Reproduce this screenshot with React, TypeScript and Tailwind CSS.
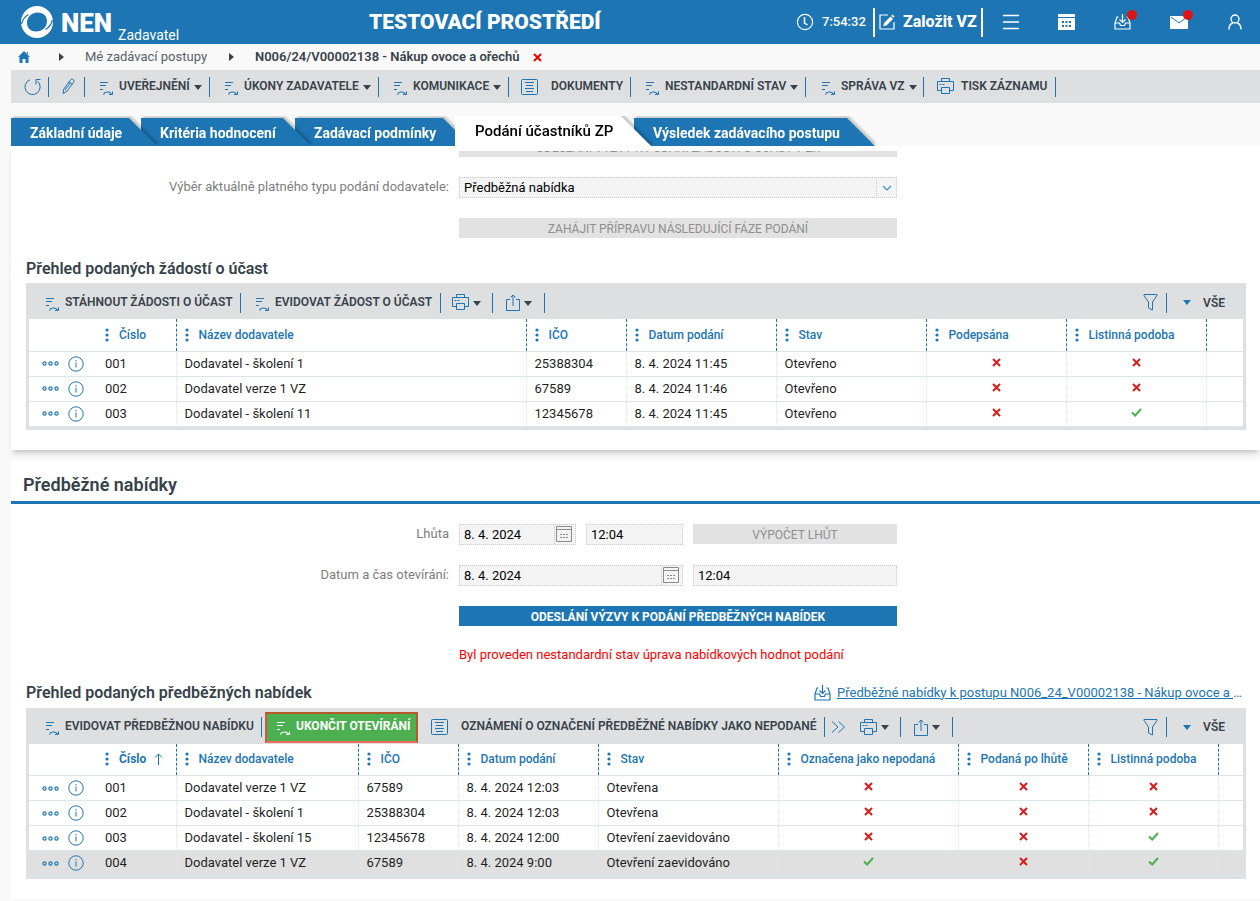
import { ReactNode } from "react";
import clsx from "clsx";

type IconProps = { className?: string };

const LogoMark = () => (
  <svg width="34" height="34" viewBox="0 0 34 34" fill="#fff">
    <path
      fillRule="evenodd"
      d="M17 1a16 16 0 1 1 0 32a16 16 0 1 1 0-32ZM18 7.500C11.500 7.500 7 12 7 18C7 23 11 26.500 16 26.500C22.500 26.500 27 22 27 16C27 11 23 7.500 18 7.500Z"
    />
    <path
      d="M1.500 19C2.500 15 5 11.500 8.500 9.500M32.500 15C31.500 19 29 22.500 25.500 24.500"
      stroke="#1d75b3"
      strokeWidth="1.200"
      fill="none"
    />
  </svg>
);

const ClockIcon = () => (
  <svg width="18" height="18" viewBox="0 0 18 18" fill="none" stroke="#fff" strokeWidth="1.200">
    <circle cx="9" cy="9" r="7.600" />
    <path d="M8.500 4v6l3 2" strokeWidth="1.500" />
  </svg>
);

const EditIcon = () => (
  <svg width="16" height="16" viewBox="0 0 16 16" fill="none" stroke="#fff">
    <path d="M9 1H1v14h14V8" strokeWidth="1.200" />
    <path d="M5 9l6.500-6.500l2.500 2.500l-6.500 6.500l-3.200.800z" fill="#fff" stroke="none" />
    <path d="M12.300 1.800l1.200-1.200l2 2l-1.200 1.200z" fill="#fff" stroke="none" />
  </svg>
);

const MenuIcon = () => (
  <svg width="18" height="16" viewBox="0 0 18 16" stroke="#fff" strokeWidth="1.500" strokeLinecap="round">
    <path d="M1.500 1.500h15M1.500 8h15M1.500 14.500h15" />
  </svg>
);

const CalendarSolidIcon = () => (
  <svg width="17" height="16" viewBox="0 0 17 16">
    <path d="M0 0h17v3H0zM0 4h17v12H0z" fill="#fff" />
    <path
      d="M4 7h2v2H4zM7.500 7h2v2h-2zM11 7h2v2h-2zM4 11h2v2H4zM7.500 11h2v2h-2zM11 11h2v2h-2z"
      fill="#1d75b3"
    />
  </svg>
);

const InboxIcon = () => (
  <svg width="17" height="16" viewBox="0 0 17 16" fill="none" stroke="currentColor" strokeWidth="1.200">
    <path d="M4.500 3H3L1 9v6h15V9l-2-6h-1.500" />
    <path d="M1 9h4.500l1 2.500h4l1-2.500H16M8.500 0v8M5.500 5.500l3 3l3-3" />
  </svg>
);

const MailIcon = () => (
  <svg width="18" height="13" viewBox="0 0 18 13">
    <path d="M0 0h18v13H0z" fill="#fff" />
    <path d="M1 1l8 6l8-6" fill="none" stroke="#1d75b3" />
  </svg>
);

const UserIcon = () => (
  <svg width="14" height="16" viewBox="0 0 14 16" fill="none" stroke="#fff" strokeWidth="1.300">
    <circle cx="7" cy="5" r="4" />
    <path d="M1 15.500C1 11.500 3 9.500 5 9M13 15.500C13 11.500 11 9.500 9 9" />
  </svg>
);

const HomeIcon = () => (
  <svg width="12" height="12" viewBox="0 0 12 12" fill="#1d75b3">
    <path d="M6 0l6 6h-1.500v6H7.500V8h-3v4H1.500V6H0zM8.500 1H10v3z" />
  </svg>
);

const RefreshIcon = () => (
  <svg width="18" height="18" viewBox="0 0 18 18" fill="none" stroke="#1d75b3">
    <path d="M6 1.800A7.600 7.600 0 1 0 13.500 3.200" />
    <path d="M16.500 1.500h-4.500v5" />
  </svg>
);

const PencilIcon = () => (
  <svg width="13" height="17" viewBox="0 0 13 17" fill="none" stroke="#1d75b3">
    <path d="M1 15.500l.800-4.500L8 2.500C9 1 10 .800 11 1.500C12.200 2.300 12.200 3.500 11.300 4.700L5 13.200zM7 4l3.200 2.300M3 12L8.500 4.800" />
  </svg>
);

const ActionIcon = ({ className }: IconProps) => (
  <svg className={className} width="15" height="15" viewBox="0 0 15 15" fill="none" stroke="currentColor">
    <path d="M1 1.500h8M1 4.500h6M1 8.500h3" strokeWidth="1.200" />
    <path d="M4.500 13.500c1-3 6-3.500 8-.500" strokeWidth="1.200" />
    <path d="M13.500 10.500v3h-3.500" />
  </svg>
);

const DocumentIcon = () => (
  <svg width="17" height="16" viewBox="0 0 17 16" fill="none" stroke="#1d75b3">
    <rect x=".5" y=".5" width="16" height="15" rx="1" />
    <path d="M4 3.500h9M5 6.500h7M4 9.500h9M5 12.500h7" />
  </svg>
);

const PrinterIcon = () => (
  <svg width="17" height="17" viewBox="0 0 17 17" fill="none" stroke="#1d75b3">
    <path d="M4.500 3.500v-3h8v3M4.500 12.500H.500v-9h16v9h-4" />
    <path d="M4.500 9.500h8v6h-8zM2.500 6.500h2M5.500 6.500h2" />
  </svg>
);

const ShareIcon = () => (
  <svg width="14" height="17" viewBox="0 0 14 17" fill="none" stroke="#1d75b3">
    <path d="M4 5.500H.500v11h13v-11H10M7 12V1M4.500 3.500L7 1l2.500 2.500" />
  </svg>
);

const FunnelIcon = () => (
  <svg width="15" height="17" viewBox="0 0 15 17" fill="none" stroke="#1d75b3">
    <path d="M1 .500h13v1L9.500 8v8l-4-2V8L1 1.500z" />
  </svg>
);

const MoreIcon = () => (
  <svg width="15" height="12" viewBox="0 0 15 12" fill="none" stroke="#1d75b3">
    <path d="M1 .500L7 6l-6 5.500M7.500 .500l6 5.500l-6 5.500" />
  </svg>
);

const CalendarIcon = () => (
  <svg width="16" height="16" viewBox="0 0 16 16" fill="none" stroke="#8b8b8b">
    <path d="M.500.500h15v15H.500zM.500 3.500h15" />
    <path d="M4 8.500h2M7 8.500h2M10 8.500h2M4 11.500h2M7 11.500h2M10 11.500h2" />
  </svg>
);

const InfoIcon = () => (
  <svg width="16" height="16" viewBox="0 0 16 16" fill="none" stroke="#1d75b3">
    <circle cx="8" cy="8" r="7.200" />
    <path d="M8 6.500v5M8 4v1.300" />
  </svg>
);

const RowMenuIcon = () => (
  <svg width="17" height="5" viewBox="0 0 17 5" fill="none" stroke="#1d75b3" strokeWidth="1.200">
    <circle cx="2.500" cy="2.500" r="1.600" />
    <circle cx="8.500" cy="2.500" r="1.600" />
    <circle cx="14.500" cy="2.500" r="1.600" />
  </svg>
);

const DotsIcon = () => (
  <svg width="4" height="14" viewBox="0 0 4 14" fill="#1d75b3">
    <circle cx="2" cy="2" r="1.600" />
    <circle cx="2" cy="7" r="1.600" />
    <circle cx="2" cy="12" r="1.600" />
  </svg>
);

const CrossIcon = ({ className }: IconProps) => (
  <svg className={className} width="9" height="9" viewBox="0 0 9 9" stroke="currentColor" strokeWidth="2">
    <path d="M1 1l7 7M8 1l-7 7" />
  </svg>
);

const CheckIcon = ({ className }: IconProps) => (
  <svg className={className} width="11" height="9" viewBox="0 0 11 9" fill="none" stroke="currentColor" strokeWidth="2">
    <path d="M1 4.500l3.200 3L10 1" />
  </svg>
);

const SortIcon = () => (
  <svg width="9" height="12" viewBox="0 0 9 12" fill="none" stroke="#1d75b3">
    <path d="M4.500 12V1M1 4.500L4.500 1L8 4.500" />
  </svg>
);

const Caret = ({ className }: IconProps) => (
  <svg className={className} width="8" height="5" viewBox="0 0 8 5" fill="currentColor">
    <path d="M0 0h8L4 5z" />
  </svg>
);

const Crumb = () => (
  <svg width="5" height="8" viewBox="0 0 5 8" fill="#37424a">
    <path d="M0 0l5 4l-5 4z" />
  </svg>
);

type ToolProps = {
  icon: ReactNode;
  label?: string;
  title?: string;
  caret?: boolean;
  className?: string;
};

const Tool = ({ icon, label, title, caret, className }: ToolProps) => (
  <button
    type="button"
    aria-label={title}
    className={clsx(
      "flex h-5 shrink-0 items-center whitespace-nowrap text-xs font-semibold text-[#37424a]",
      className
    )}
  >
    {icon}
    {label && <span className="mb-[2px]">{label}</span>}
    {caret && <Caret className="ml-1 mt-px" />}
  </button>
);

const action = <ActionIcon className="mr-[5px] mt-[3px] text-[#1d75b3]" />;
const sep = "border-r border-[#1d75b3]";

const tabs = [
  { label: "Základní údaje", className: "z-50 w-[146px]" },
  { label: "Kritéria hodnocení", className: "z-40 -ml-4 w-[170px]" },
  { label: "Zadávací podmínky", className: "z-30 -ml-4 w-[176px]" },
  { label: "Podání účastníků ZP", className: "z-50 -ml-4 w-[196px]", active: true },
  { label: "Výsledek zadávacího postupu", className: "z-20 -ml-[17px] w-[241px]" },
];

const Tabs = () => (
  <nav className="ml-[11px] mt-[13px] flex h-[30px] items-end overflow-hidden">
    {tabs.map((tab) => (
      <div
        key={tab.label}
        className={clsx(
          "relative shrink-0 drop-shadow-[2px_-2px_1px_rgba(0,0,0,0.2)]",
          tab.className
        )}
      >
        <button
          type="button"
          className={clsx(
            "block w-full whitespace-nowrap text-left",
            tab.active
              ? "h-[30px] bg-white pl-5 text-[15px] font-medium text-black [clip-path:polygon(0_0,calc(100%-30px)_0,100%_100%,0_100%)]"
              : "h-7 bg-[#1d75b3] pl-[19px] pt-[2px] text-sm font-bold text-white [clip-path:polygon(0_0,calc(100%-28px)_0,100%_100%,0_100%)]"
          )}
        >
          {tab.label}
        </button>
      </div>
    ))}
  </nav>
);

type Cell = string | boolean;

type Column = { label: string; width: string; sorted?: boolean };

type GridProps = {
  label: string;
  columns: Column[];
  rows: Cell[][];
  selected?: number;
};

const Grid = ({ label, columns, rows, selected }: GridProps) => (
  <table aria-label={label} className="w-full table-fixed border-collapse bg-white">
    <colgroup>
      <col className="w-[68px]" />
      {columns.map((column) => (
        <col key={column.label} className={column.width} />
      ))}
      <col />
    </colgroup>
    <thead>
      <tr className="h-8 border-b border-[#dce7ec]">
        <th />
        {columns.map((column) => (
          <th
            key={column.label}
            className={clsx(
              "border-r border-dashed border-r-[#1d75b3] border-b-[#dce7ec] p-0 text-left text-xs text-[#1d75b3] [border-bottom-style:solid]",
              column.sorted ? "font-bold" : "font-medium"
            )}
          >
            <span className="flex items-center whitespace-nowrap pl-2">
              <DotsIcon />
              <span className="ml-[10px] mr-2">{column.label}</span>
              {column.sorted && <SortIcon />}
            </span>
          </th>
        ))}
        <th />
      </tr>
    </thead>
    <tbody>
      {rows.map((row, i) => (
        <tr
          key={i}
          className={clsx(
            "h-[25px] border-b border-[#dce7ec]",
            selected === i && "border-t border-t-[#b9bcbe] bg-[#e0e0e0]"
          )}
        >
          <td className="p-0">
            <span className="flex items-center pl-[13px]">
              <button type="button" aria-label="Nabídka řádku">
                <RowMenuIcon />
              </button>
              <button type="button" aria-label="Detail" className="ml-[9px]">
                <InfoIcon />
              </button>
            </span>
          </td>
          {row.map((cell, j) => (
            <td
              key={j}
              className={clsx(
                "border-r border-dotted border-r-[#dce7ec] p-0 text-[13px] leading-6 text-[#1f1f1f] [border-bottom-style:solid] [border-top-style:solid]",
                typeof cell === "boolean" ? "pl-px text-center" : "whitespace-nowrap pl-2"
              )}
            >
              {cell === true && <CheckIcon className="mb-px inline-block align-baseline text-[#4caf50]" />}
              {cell === false && <CrossIcon className="mb-px inline-block align-baseline text-[#dc1c1c]" />}
              {typeof cell === "string" && cell}
            </td>
          ))}
          <td />
        </tr>
      ))}
    </tbody>
  </table>
);

const GridFilter = () => (
  <div className="ml-auto flex items-center">
    <Tool icon={<FunnelIcon />} title="Filtr" className={clsx("w-6", sep)} />
    <button type="button" className="flex items-center pl-4 pr-[18px] text-xs font-semibold text-[#37424a]">
      <Caret className="mr-3 text-[#1d75b3]" />
      VŠE
    </button>
  </div>
);

const requestColumns: Column[] = [
  { label: "Číslo", width: "w-[79px]" },
  { label: "Název dodavatele", width: "w-[350px]" },
  { label: "IČO", width: "w-[100px]" },
  { label: "Datum podání", width: "w-[150px]" },
  { label: "Stav", width: "w-[150px]" },
  { label: "Podepsána", width: "w-[140px]" },
  { label: "Listinná podoba", width: "w-[140px]" },
];

const requests: Cell[][] = [
  ["001", "Dodavatel - školení 1", "25388304", "8. 4. 2024 11:45", "Otevřeno", false, false],
  ["002", "Dodavatel verze 1 VZ", "67589", "8. 4. 2024 11:46", "Otevřeno", false, false],
  ["003", "Dodavatel - školení 11", "12345678", "8. 4. 2024 11:45", "Otevřeno", false, true],
];

const offerColumns: Column[] = [
  { label: "Číslo", width: "w-[79px]", sorted: true },
  { label: "Název dodavatele", width: "w-[182px]" },
  { label: "IČO", width: "w-[100px]" },
  { label: "Datum podání", width: "w-[140px]" },
  { label: "Stav", width: "w-[180px]" },
  { label: "Označena jako nepodaná", width: "w-[180px]" },
  { label: "Podaná po lhůtě", width: "w-[130px]" },
  { label: "Listinná podoba", width: "w-[130px]" },
];

const offers: Cell[][] = [
  ["001", "Dodavatel verze 1 VZ", "67589", "8. 4. 2024 12:03", "Otevřena", false, false, false],
  ["002", "Dodavatel - školení 1", "25388304", "8. 4. 2024 12:03", "Otevřena", false, false, false],
  ["003", "Dodavatel - školení 15", "12345678", "8. 4. 2024 12:00", "Otevření zaevidováno", false, false, true],
  ["004", "Dodavatel verze 1 VZ", "67589", "8. 4. 2024 9:00", "Otevření zaevidováno", true, false, true],
];

const formRow = "grid grid-cols-[438fr_438fr_353fr] gap-x-[10px]";
const formLabel = "text-right text-[13px] leading-5 text-[#7d7d7d]";
const field =
  "h-[21px] w-full min-w-0 border border-dotted border-[#c8c8c8] bg-[#f4f4f4] px-1 text-[13px] text-black outline-none";
const disabledButton = "h-5 w-full shrink-0 bg-[#e2e2e2] pt-[2px] text-xs text-[#8f8f8f]";

const DateField = ({ id }: { id: string }) => (
  <div className="flex h-[21px] min-w-0 border border-dotted border-[#c8c8c8] bg-[#f4f4f4]">
    <input
      id={id}
      defaultValue="8. 4. 2024"
      className="w-full min-w-0 px-1 pt-px text-[13px] text-black outline-none"
    />
    <button
      type="button"
      aria-label="Kalendář"
      className="flex w-[21px] shrink-0 items-center border-l border-dotted border-[#c8c8c8] pl-px"
    >
      <CalendarIcon />
    </button>
  </div>
);

const Header = () => (
  <header className="flex h-11 items-center bg-[#1d75b3] text-white">
    <div className="flex h-full w-[369px] shrink-0 items-center pl-5">
      <LogoMark />
      <span className="ml-[7px] pt-[2px] text-[26px] font-black">NEN</span>
      <span className="ml-[6px] self-end text-sm leading-[18px]">Zadavatel</span>
    </div>
    <h1 className="whitespace-nowrap pt-[2px] text-[21px] font-black">TESTOVACÍ PROSTŘEDÍ</h1>
    <div className="ml-auto flex shrink-0 items-center">
      <ClockIcon />
      <span className="ml-2 w-[51px] text-[13px] font-medium">7:54:32</span>
      <button
        type="button"
        className="flex h-[29px] w-[110px] items-center gap-2 whitespace-nowrap border-x-2 border-white pl-1 text-base font-extrabold"
      >
        <EditIcon />
        Založit VZ
      </button>
      <button type="button" aria-label="Menu" className="ml-[19px]">
        <MenuIcon />
      </button>
      <button type="button" aria-label="Kalendář" className="ml-[38px]">
        <CalendarSolidIcon />
      </button>
      <button type="button" aria-label="Doručené" className="relative ml-[39px]">
        <InboxIcon />
        <span className="absolute -right-[6px] -top-1 size-[10px] rounded-full bg-[#dc1414]" />
      </button>
      <button type="button" aria-label="Zprávy" className="relative ml-[39px]">
        <MailIcon />
        <span className="absolute -right-[5px] -top-[6px] size-[10px] rounded-full bg-[#dc1414]" />
      </button>
      <button type="button" aria-label="Uživatel" className="ml-[40px] mr-[18px]">
        <UserIcon />
      </button>
    </div>
  </header>
);

const App = () => {
  return (
    <div className="min-h-screen bg-[#f9f9f9] font-[Roboto,sans-serif] text-[#37424a]">
      <Header />

      <nav className="flex h-[26px] items-center text-[13px]">
        <a href="#" aria-label="Domů" className="ml-[18px]">
          <HomeIcon />
        </a>
        <span className="ml-[29px]">
          <Crumb />
        </span>
        <a href="#" className="ml-[21px] w-[122px] whitespace-nowrap text-[#58616a]">
          Mé zadávací postupy
        </a>
        <span className="ml-[22px]">
          <Crumb />
        </span>
        <span className="ml-[21px] w-[265px] whitespace-nowrap font-semibold">
          N006/24/V00002138 - Nákup ovoce a ořechů
        </span>
        <button type="button" aria-label="Zavřít" className="ml-[13px]">
          <CrossIcon className="text-[#f00000]" />
        </button>
      </nav>

      <div className="ml-[11px] flex h-[33px] items-center overflow-hidden bg-[#dedfe1]">
        <Tool icon={<RefreshIcon />} title="Obnovit" className={clsx("w-[38px] pl-[13px]", sep)} />
        <Tool icon={<PencilIcon />} title="Upravit" className={clsx("w-[36px] pl-[13px]", sep)} />
        <Tool icon={action} label="UVEŘEJNĚNÍ" caret className={clsx("w-[125px] pl-[14px]", sep)} />
        <Tool icon={action} label="ÚKONY ZADAVATELE" caret className={clsx("w-[169px] pl-[14px]", sep)} />
        <Tool icon={action} label="KOMUNIKACE" caret className={clsx("w-[130px] pl-[14px]", sep)} />
        <Tool
          icon={
            <span className="mr-[13px]">
              <DocumentIcon />
            </span>
          }
          label="DOKUMENTY"
          className={clsx("w-[122px] pl-3", sep)}
        />
        <Tool icon={action} label="NESTANDARDNÍ STAV" caret className={clsx("w-[175px] pl-[14px]", sep)} />
        <Tool icon={action} label="SPRÁVA VZ" caret className={clsx("w-[118px] pl-[15px]", sep)} />
        <Tool
          icon={
            <span className="mr-[7px]">
              <PrinterIcon />
            </span>
          }
          label="TISK ZÁZNAMU"
          className={clsx("w-[132px] pl-[13px]", sep)}
        />
      </div>

      <Tabs />

      <main className="ml-[11px]">
        <section className="bg-white pb-5 pt-[5px] shadow-[0_5px_5px_-2px_rgba(0,0,0,0.2)]">
          <div className={formRow}>
            <div className="col-start-2 flex h-[6px] items-end overflow-hidden">
              <button type="button" disabled className={disabledButton}>
                ODESLÁNÍ VÝZVY K PODÁNÍ ŽÁDOSTI O ÚČAST V ZŘ
              </button>
            </div>
          </div>
          <div className={clsx(formRow, "mt-5")}>
            <label htmlFor="submission-type" className={formLabel}>
              Výběr aktuálně platného typu podání dodavatele:
            </label>
            <div className="relative">
              <select id="submission-type" className={clsx(field, "block appearance-none rounded-none")}>
                <option>Předběžná nabídka</option>
              </select>
              <span className="pointer-events-none absolute inset-y-0 right-0 flex w-[21px] items-center justify-center border-l border-dotted border-[#c8c8c8]">
                <svg width="10" height="6" viewBox="0 0 10 6" fill="none" stroke="#3b8cc4" strokeWidth="1.200">
                  <path d="M1 1l4 4l4-4" />
                </svg>
              </span>
            </div>
          </div>
          <div className={clsx(formRow, "mt-5")}>
            <button type="button" disabled className={clsx(disabledButton, "col-start-2")}>
              ZAHÁJIT PŘÍPRAVU NÁSLEDUJÍCÍ FÁZE PODÁNÍ
            </button>
          </div>

          <div className="ml-[15px] mr-[14px] mt-5">
            <h3 className="h-[25px] text-base font-semibold leading-[22px]">Přehled podaných žádostí o účast</h3>
            <div className="border-x-[3px] border-b-[3px] border-[#dedfe1]">
              <div className="-ml-[3px] flex h-9 items-center bg-[#dedfe1] pt-[3px]">
                <Tool icon={action} label="STÁHNOUT ŽÁDOSTI O ÚČAST" className={clsx("w-[215px] pl-[19px]", sep)} />
                <Tool icon={action} label="EVIDOVAT ŽÁDOST O ÚČAST" className={clsx("w-[200px] pl-[14px]", sep)} />
                <Tool icon={<PrinterIcon />} title="Tisk" caret className={clsx("w-[52px] pl-[11px]", sep)} />
                <Tool icon={<ShareIcon />} title="Export" caret className={clsx("w-[52px] pl-[13px]", sep)} />
                <GridFilter />
              </div>
              <Grid label="Přehled podaných žádostí o účast" columns={requestColumns} rows={requests} />
            </div>
          </div>
        </section>

        <section className="mt-[10px] bg-white pb-5">
          <h2 className="h-11 border-b-[3px] border-[#1d75b3] pl-3 text-lg font-semibold leading-[50px]">
            Předběžné nabídky
          </h2>
          <div className={clsx(formRow, "mt-5")}>
            <label htmlFor="deadline-date" className={formLabel}>
              Lhůta
            </label>
            <div className="grid grid-cols-[117fr_97fr_204fr] gap-x-[10px]">
              <DateField id="deadline-date" />
              <input aria-label="Čas lhůty" defaultValue="12:04" className={field} />
              <button type="button" disabled className={disabledButton}>
                VÝPOČET LHŮT
              </button>
            </div>
          </div>
          <div className={clsx(formRow, "mt-5")}>
            <label htmlFor="opening-date" className={formLabel}>
              Datum a čas otevírání:
            </label>
            <div className="grid grid-cols-[224fr_204fr] gap-x-[10px]">
              <DateField id="opening-date" />
              <input aria-label="Čas otevírání" defaultValue="12:04" className={field} />
            </div>
          </div>
          <div className={clsx(formRow, "mt-5")}>
            <button type="button" className="col-start-2 h-5 bg-[#1d75b3] pt-[2px] text-xs font-bold text-white">
              ODESLÁNÍ VÝZVY K PODÁNÍ PŘEDBĚŽNÝCH NABÍDEK
            </button>
            <p className="col-start-2 mt-[18px] text-[13px] leading-[22px] text-[#ff0000]">
              Byl proveden nestandardní stav úprava nabídkových hodnot podání
            </p>
          </div>

          <div className="ml-[15px] mr-[14px] mt-[17px]">
            <div className="flex h-[25px] justify-between">
              <h3 className="text-base font-semibold leading-5">Přehled podaných předběžných nabídek</h3>
              <div className="mr-1 flex h-5 items-center text-[13px] text-[#1d75b3]">
                <InboxIcon />
                <a href="#" className="ml-[6px] w-[405px] truncate underline">
                  Předběžné nabídky k postupu N006_24_V00002138 - Nákup ovoce a ořechů
                </a>
              </div>
            </div>
            <div className="border-x-[3px] border-b-[3px] border-[#dedfe1]">
              <div className="-ml-[3px] flex h-9 items-center bg-[#dedfe1] pt-[3px]">
                <Tool icon={action} label="EVIDOVAT PŘEDBĚŽNOU NABÍDKU" className={clsx("w-[236px] pl-[19px]", sep)} />
                <button
                  type="button"
                  className="ml-[3px] flex h-[31px] w-[153px] items-center whitespace-nowrap border-2 border-[#b5582a] border-b-[#f26a5e] border-l-[#e0503c] bg-[#4caf50] pl-[9px] text-xs font-bold text-white"
                >
                  <ActionIcon className="mr-[5px] mt-[3px]" />
                  <span className="mb-[2px]">UKONČIT OTEVÍRÁNÍ</span>
                </button>
                <Tool
                  icon={
                    <span className="mr-[13px]">
                      <DocumentIcon />
                    </span>
                  }
                  label="OZNÁMENÍ O OZNAČENÍ PŘEDBĚŽNÉ NABÍDKY JAKO NEPODANÉ"
                  className={clsx("w-[407px] pl-[13px]", sep)}
                />
                <Tool icon={<MoreIcon />} title="Další" className="w-6 pl-[6px]" />
                <Tool icon={<PrinterIcon />} title="Tisk" caret className={clsx("w-[52px] pl-[11px]", sep)} />
                <Tool icon={<ShareIcon />} title="Export" caret className={clsx("w-[52px] pl-[13px]", sep)} />
                <GridFilter />
              </div>
              <Grid
                label="Přehled podaných předběžných nabídek"
                columns={offerColumns}
                rows={offers}
                selected={3}
              />
            </div>
          </div>
        </section>
      </main>
    </div>
  );
};

export default App;
